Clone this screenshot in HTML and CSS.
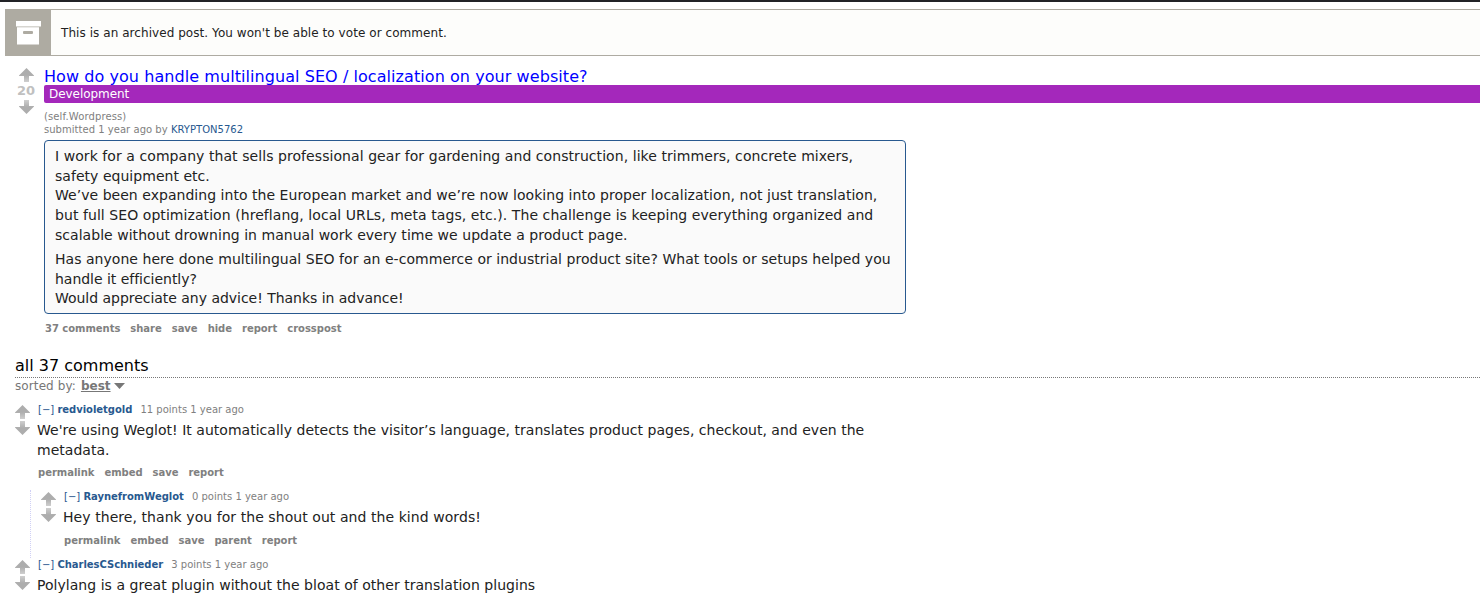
FILE: index.html
```
<!DOCTYPE html>
<html lang="en">
<head>
  <meta charset="UTF-8">
  <title>How do you handle multilingual SEO / localization on your website?</title>
  <link rel="stylesheet" href="styles.css">
</head>
<body>
  <svg class="sprites" width="0" height="0">
    <defs>
      <linearGradient id="stem" x1="0" y1="0" x2="0" y2="1">
        <stop offset="0.5" stop-color="#adadad"/>
        <stop offset="1" stop-color="#cfcfcf"/>
      </linearGradient>
      <symbol id="arrow" viewBox="0 0 15 14">
        <path d="M7.5 0L15 7.5V8H10V14H5V8H0V7.5Z" fill="url(#stem)"/>
      </symbol>
    </defs>
  </svg>

  <div class="infobar">
    <div class="infobar-icon">
      <svg width="25" height="24" viewBox="0 0 25 24">
        <path fill="#fff" d="M0 0h25v5.500H0z"/>
        <path fill="#fff" fill-rule="evenodd" d="M1 6.300h22V23.500H1zM8 10a1 1 0 0 0-1 1v1a1 1 0 0 0 1 1h8a1 1 0 0 0 1-1v-1a1 1 0 0 0-1-1z"/>
      </svg>
    </div>
    <p>This is an archived post. You won't be able to vote or comment.</p>
  </div>

  <div class="post">
    <div class="votes">
      <svg class="arrow"><use href="#arrow"/></svg>
      <span class="score">20</span>
      <svg class="arrow down"><use href="#arrow"/></svg>
    </div>
    <div class="entry">
      <h1><a href="#">How do you handle multilingual SEO / localization on your website?</a></h1>
      <div class="flair">Development</div>
      <div class="tagline domain">(self.Wordpress)</div>
      <div class="tagline submitted">submitted 1 year ago by <a href="#">KRYPTON5762</a></div>
      <div class="selftext">
        <p><span class="loose">I work for a company that sells professional gear for gardening and construction, like trimmers, concrete mixers,</span><br>
        safety equipment etc.<br>
        We’ve been expanding into the European market and we’re now looking into proper localization, not just translation,<br>
        <span class="loose">but full SEO optimization (hreflang, local URLs, meta tags, etc.). The challenge is keeping everything organized and</span><br>
        scalable without drowning in manual work every time we update a product page.</p>
        <p>Has anyone here done multilingual SEO for an e-commerce or industrial product site? What tools or setups helped you<br>
        <span class="tight">handle it efficiently?<br>
        Would appreciate any advice! Thanks in advance!</span></p>
      </div>
      <div class="buttons">
        <a href="#">37 comments</a><a href="#">share</a><a href="#">save</a><a href="#">hide</a><a href="#">report</a><a href="#">crosspost</a>
      </div>
    </div>
  </div>

  <div class="comments">
    <h2>all 37 comments</h2>
    <div class="sort">sorted by: <b>best</b>
      <svg width="11" height="6" viewBox="0 0 11 6"><path d="M0 0H11L5.500 6Z" fill="#777"/></svg>
    </div>

    <div class="comment">
      <div class="votes">
        <svg class="arrow"><use href="#arrow"/></svg>
        <svg class="arrow down"><use href="#arrow"/></svg>
      </div>
      <div class="entry">
        <div class="meta"><a href="#">[−]</a> <a class="author" href="#">redvioletgold</a> <span>11 points 1 year ago</span></div>
        <p>We're using Weglot! It automatically detects the visitor’s language, translates product pages, checkout, and even the<br>
        metadata.</p>
        <div class="buttons">
          <a href="#">permalink</a><a href="#">embed</a><a href="#">save</a><a href="#">report</a>
        </div>
      </div>
    </div>

    <div class="replies">
      <div class="comment">
        <div class="votes">
          <svg class="arrow"><use href="#arrow"/></svg>
          <svg class="arrow down"><use href="#arrow"/></svg>
        </div>
        <div class="entry">
          <div class="meta"><a href="#">[−]</a> <a class="author" href="#">RaynefromWeglot</a> <span>0 points 1 year ago</span></div>
          <p class="loose">Hey there, thank you for the shout out and the kind words!</p>
          <div class="buttons">
            <a href="#">permalink</a><a href="#">embed</a><a href="#">save</a><a href="#">parent</a><a href="#">report</a>
          </div>
        </div>
      </div>
    </div>

    <div class="comment">
      <div class="votes">
        <svg class="arrow"><use href="#arrow"/></svg>
        <svg class="arrow down"><use href="#arrow"/></svg>
      </div>
      <div class="entry">
        <div class="meta"><a href="#">[−]</a> <a class="author" href="#">CharlesCSchnieder</a> <span>3 points 1 year ago</span></div>
        <p>Polylang is a great plugin without the bloat of other translation plugins</p>
      </div>
    </div>
  </div>
</body>
</html>
```
FILE: styles.css
```
* {
  margin: 0;
  padding: 0;
  box-sizing: border-box;
}

body {
  height: 600px;
  overflow: hidden;
  border-top: 2px solid #222327;
  background: #fff;
  font-family: Verdana, "DejaVu Sans", sans-serif;
  font-size: 10px;
  color: #222;
  white-space: nowrap;
}

a {
  color: #369;
  text-decoration: none;
}

svg {
  display: block;
}

.infobar {
  display: flex;
  align-items: center;
  height: 47px;
  margin: 7px 0 0 5px;
  border: 1px solid #aeaba2;
  border-width: 1px 0 1px 1px;
  background: #fdfdfb;
}

.infobar-icon {
  display: flex;
  align-items: center;
  justify-content: center;
  width: 45px;
  height: 45px;
  background: #aeaba2;
}

.infobar p {
  margin-left: 10px;
  font-size: 12px;
  letter-spacing: 0.06px;
}

.post {
  display: flex;
  padding-top: 11px;
}

.post .votes {
  display: flex;
  flex-direction: column;
  align-items: center;
  width: 44px;
  padding: 1px 0 0 9px;
}

.arrow {
  width: 15px;
  height: 14px;
}

.down {
  transform: rotate(180deg);
}

.score {
  height: 18px;
  margin-right: 1px;
  line-height: 17px;
  font-size: 13px;
  font-weight: bold;
  color: #c0c0c0;
}

.post .entry {
  flex: 1;
}

h1 {
  height: 18px;
  line-height: 19px;
  font-size: 16px;
  font-weight: normal;
  letter-spacing: 0.065px;
}

h1 a {
  color: #0000ff;
}

.flair {
  height: 18px;
  padding-left: 5px;
  border-radius: 2px 0 0 2px;
  background: #a428bb;
  color: #fff;
  font-size: 12px;
  line-height: 18px;
  letter-spacing: -0.05px;
}

.tagline {
  height: 13px;
  line-height: 13px;
  letter-spacing: 0.03px;
  color: #808080;
}

.tagline a,
.meta a {
  color: #28598f;
}

.domain {
  margin-top: 7px;
  letter-spacing: 0.12px;
}

.selftext {
  width: 862px;
  height: 174px;
  margin-top: 4px;
  padding: 6px 10px 4px;
  border: 1px solid #28598f;
  border-radius: 4px;
  background: #fafafa;
}

.selftext p,
.comment p {
  font-size: 14px;
  line-height: 19.7px;
  letter-spacing: 0.035px;
}

.selftext p + p {
  margin-top: 4.3px;
}

.selftext .loose,
.comment .loose {
  letter-spacing: 0.065px;
}

.selftext .tight {
  letter-spacing: -0.03px;
}

.buttons {
  display: flex;
  gap: 10px;
  padding-left: 1px;
  line-height: 12px;
  font-weight: bold;
  letter-spacing: -0.03px;
}

.buttons a {
  color: #808080;
}

.post .buttons {
  margin-top: 9px;
}

.comments {
  padding-left: 15px;
}

h2 {
  height: 23px;
  margin-top: 20px;
  border-bottom: 1px dotted #777;
  color: #000;
  font-size: 16px;
  font-weight: normal;
  line-height: 21px;
}

.sort {
  display: flex;
  align-items: center;
  gap: 3px;
  height: 15px;
  color: #777;
  font-size: 12px;
  letter-spacing: 0.1px;
}

.sort b {
  margin-left: 2px;
  letter-spacing: 0;
  text-decoration: underline;
}

.comment {
  display: flex;
}

.comment .votes {
  width: 22px;
  padding-top: 2px;
}

.comment .down {
  margin-top: 2px;
}

.sort + .comment {
  height: 87px;
  margin-top: 10px;
}

.sort + .comment p {
  letter-spacing: 0.02px;
}

.meta {
  height: 18px;
  padding-left: 1px;
  line-height: 14px;
  color: #808080;
}

.author {
  font-weight: bold;
  letter-spacing: -0.03px;
}

.meta span {
  margin-left: 5px;
}

.comment p {
  margin-bottom: 7px;
}

.replies {
  height: 68px;
  margin-left: 15px;
  padding-left: 10px;
  border-left: 1px dotted #d0d0f5;
}
```
